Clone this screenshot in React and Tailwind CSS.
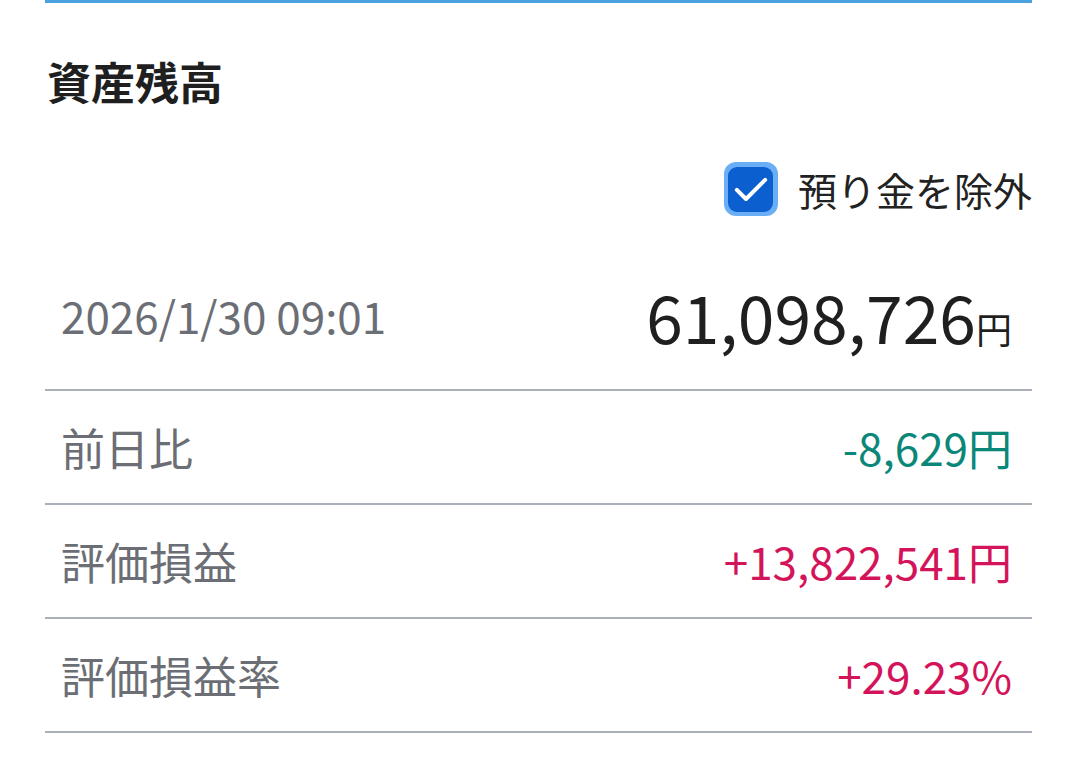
import React from 'react';

const rows = [
  { label: '前日比', value: '-8,629円', color: 'text-[#0b877a]' },
  { label: '評価損益', value: '+13,822,541円', color: 'text-[#d4145a]' },
  { label: '評価損益率', value: '+29.23%', color: 'text-[#d4145a]' },
];

const CheckIcon = () => (
  <svg viewBox="0 0 24 24" className="w-[40px] h-[40px]" fill="none" stroke="white" strokeWidth="2.4" strokeLinecap="round" strokeLinejoin="round">
    <path d="M3.5 12.5l5.5 5.5L20.5 6.5" />
  </svg>
);

const App = () => {
  return (
    <div
      className="min-h-[762px] bg-white px-[45px] text-[#1f1f1f]"
      style={{ fontFamily: '"Noto Sans CJK JP", "Noto Sans", sans-serif' }}
    >
      <div className="h-[3px] bg-[#4aa3df]" />

      <h2 className="mt-[48px] pl-[2px] text-[44px] font-bold leading-[60px]">資産残高</h2>

      <div className="mt-[51px] flex items-center justify-end gap-[20px]">
        <span className="flex h-[54px] w-[54px] items-center justify-center rounded-[12px] bg-[#6aaef5]">
          <span className="flex h-[45px] w-[45px] items-center justify-center rounded-[9px] bg-[#0b5fcf]">
            <CheckIcon />
          </span>
        </span>
        <span className="text-[39px] leading-[54px] text-[#222]">預り金を除外</span>
      </div>

      <div className="flex h-[175px] items-center justify-between border-b-2 border-[#a9b0b8] pt-[24px] pl-[16px] pr-[20px]">
        <span className="text-[44px] text-[#6b6e74]">2026/1/30 09:01</span>
        <span className="flex items-baseline">
          <span className="text-[66px] leading-none">61,098,726</span>
          <span className="text-[36px] leading-none">円</span>
        </span>
      </div>

      {rows.map((row) => (
        <div
          key={row.label}
          className="flex h-[114px] items-center justify-between border-b-2 border-[#a9b0b8] pl-[16px] pr-[20px]"
        >
          <span className="text-[44px] text-[#6b6e74]">{row.label}</span>
          <span className={`text-[44px] ${row.color}`}>{row.value}</span>
        </div>
      ))}
    </div>
  );
};

export default App;
